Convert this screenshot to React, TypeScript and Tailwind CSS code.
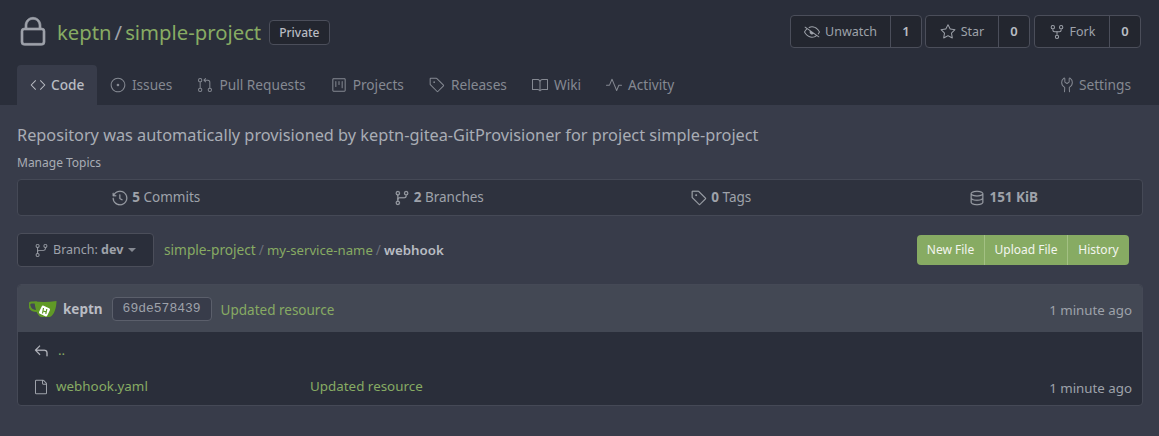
import type { ReactNode } from 'react';
import {
  GoBook,
  GoCode,
  GoDatabase,
  GoEyeClosed,
  GoFile,
  GoGitBranch,
  GoGitPullRequest,
  GoHistory,
  GoIssueOpened,
  GoLock,
  GoProject,
  GoPulse,
  GoReply,
  GoRepoForked,
  GoStar,
  GoTag,
  GoTools,
} from 'react-icons/go';

const tabs = [
  { label: 'Issues', icon: <GoIssueOpened size={16} /> },
  { label: 'Pull Requests', icon: <GoGitPullRequest size={16} /> },
  { label: 'Projects', icon: <GoProject size={16} /> },
  { label: 'Releases', icon: <GoTag size={16} /> },
  { label: 'Wiki', icon: <GoBook size={16} /> },
  { label: 'Activity', icon: <GoPulse size={16} /> },
];

function CountButton({ icon, label, count, width }: { icon: ReactNode; label: string; count: string; width: string }) {
  return (
    <div className="flex h-[33px] rounded border border-[#4b4e5a] bg-[#23262f] text-[12.5px] text-[#9ea2aa]">
      <div className={`flex items-center justify-center gap-[5px] pt-[1px] ${width}`}>
        {icon}
        <span className="pt-[1px]">{label}</span>
      </div>
      <div className="flex w-[31px] items-center justify-center border-l border-[#4b4e5a] pt-[1px] text-[13px] font-semibold text-[#b9bcc3]">
        {count}
      </div>
    </div>
  );
}

function Stat({ icon, value, label }: { icon: ReactNode; value: string; label?: string }) {
  return (
    <div className="flex flex-1 items-center justify-center gap-[4px] text-[13.5px] text-[#9ea2aa] [&_svg]:stroke-[0.3px]">
      {icon}
      <span>
        <b className="font-bold">{value}</b>
        {label ? ` ${label}` : ''}
      </span>
    </div>
  );
}

function TeaLogo() {
  return (
    <svg width="28" height="20" viewBox="0 0 28 20" className="shrink-0">
      <path d="M8 3.5 H2.5 C0.5 3.5 0 5 0.5 7 C1.2 10 4 12 8 12" fill="none" stroke="#609926" strokeWidth="2" />
      <path d="M5.5 2.5 C12 3.2 20 3.2 27.5 2 C27.5 8 25.5 16 21 18 H12 C8 16.5 6 9 5.5 2.5 Z" fill="#609926" />
      <rect x="11" y="7.5" width="9" height="9" rx="1.5" fill="#fff" transform="rotate(25 15.5 12)" />
      <path d="M14.5 9 L13.5 14.5 M17.8 10 L16.8 15 M14 12 L17 12.8" stroke="#609926" strokeWidth="1.2" fill="none" />
    </svg>
  );
}

export default function App() {
  return (
    <div className="min-h-[436px] bg-[#383c4a] font-['Noto_Sans',sans-serif] text-[#9e9e9e]">
      {/* Repo header and tabs */}
      <div className="h-[105px] bg-[#2a2e3a] px-[17px]">
        <div className="flex h-[65px] items-start justify-between">
          <div className="flex items-center pt-[15px]">
            <GoLock size={32} className="stroke-[0.5px] text-[#9ea2aa]" />
            <div className="ml-[8px] flex items-center text-[20.3px] leading-[34px] text-[#87ab63]">
              <span>keptn</span>
              <span className="mx-[3px] text-[#9ea2aa]">/</span>
              <span>simple-project</span>
            </div>
            <span className="ml-[8px] rounded border border-[#4b4e5a] bg-[#23262f] px-[9px] py-[3px] text-[12px] font-medium leading-[17px] text-[#b9bcc3]">
              Private
            </span>
          </div>
          <div className="flex gap-[3px] pt-[15px] pr-[1px]">
            <CountButton icon={<GoEyeClosed size={16} />} label="Unwatch" count="1" width="w-[99px]" />
            <CountButton icon={<GoStar size={16} />} label="Star" count="0" width="w-[72px]" />
            <div className="ml-[1px]">
              <CountButton icon={<GoRepoForked size={16} />} label="Fork" count="0" width="w-[74px]" />
            </div>
          </div>
        </div>
        <div className="flex h-[40px] items-center justify-between text-[13.7px] text-[#858992]">
          <div className="flex h-full items-center">
            <div className="flex h-full items-center gap-[5px] rounded-t bg-[#383c4a] px-[13px] font-medium text-[#b9bcc3]">
              <GoCode size={16} />
              <span className="pt-[1px]">Code</span>
            </div>
            {tabs.map((t) => (
              <div key={t.label} className="flex h-full items-center gap-[6px] px-[12.5px]">
                {t.icon}
                <span className="pt-[1px]">{t.label}</span>
              </div>
            ))}
          </div>
          <div className="flex items-center gap-[4px] pr-[11px]">
            <GoTools size={16} />
            <span className="pt-[1px]">Settings</span>
          </div>
        </div>
      </div>

      <div className="pl-[17px] pr-[16px]">
        {/* Description */}
        <p className="pt-[19px] text-[16.3px] leading-[22px] text-[#a9adb5]">
          Repository was automatically provisioned by keptn-gitea-GitProvisioner for project simple-project
        </p>
        <p className="mt-[9px] text-[12px] leading-[16px] text-[#a9adb5]">Manage Topics</p>

        {/* Stats */}
        <div className="mt-[8px] flex h-[37px] rounded border border-[#454956] bg-[#2e323e]">
          <div className="-mx-[3px] flex flex-1">
            <Stat icon={<GoHistory size={16} />} value="5" label="Commits" />
            <Stat icon={<GoGitBranch size={16} />} value="2" label="Branches" />
            <Stat icon={<GoTag size={16} />} value="0" label="Tags" />
            <Stat icon={<GoDatabase size={16} />} value="151 KiB" />
          </div>
        </div>

        {/* Branch and breadcrumb */}
        <div className="mt-[17px] flex h-[34px] items-center justify-between">
          <div className="flex items-center">
            <div className="flex h-[34px] w-[137px] items-center gap-[4px] rounded border border-[#4b4e5a] bg-[#2a2e3a] pl-[16px] text-[12.5px] text-[#9ea2aa]">
              <GoGitBranch size={15} />
              <span>
                Branch: <b className="font-bold">dev</b>
              </span>
              <span className="ml-[1px] h-0 w-0 border-x-[4px] border-t-[4px] border-x-transparent border-t-[#858992]" />
            </div>
            <div className="ml-[10px] text-[13.7px] text-[#87ab63]">
              <span>simple-project</span>
              <span className="mx-[3px] text-[#6b6f7a]">/</span>
              <span className="text-[13.2px]">my-service-name</span>
              <span className="mx-[3px] text-[#6b6f7a]">/</span>
              <b className="text-[13.3px] font-semibold text-[#b9bcc3]">webhook</b>
            </div>
          </div>
          <div className="mr-[14px] flex h-[30px] rounded bg-[#87ab63] text-[12px] text-[#f3f5ef]">
            <span className="flex w-[68px] items-center justify-center border-r border-[#a3c083]">New File</span>
            <span className="flex w-[83px] items-center justify-center border-r border-[#a3c083]">Upload File</span>
            <span className="flex w-[61px] items-center justify-center">History</span>
          </div>
        </div>

        {/* File table */}
        <div className="mt-[17px] overflow-hidden rounded border border-[#454956] bg-[#2a2e3a]">
          <div className="flex h-[47px] items-center justify-between bg-[#434854] pl-[11px] pr-[10px]">
            <div className="flex items-center">
              <TeaLogo />
              <b className="ml-[6px] pt-[1px] text-[13.5px] font-bold text-[#b9bcc3]">keptn</b>
              <span className="ml-[9px] flex h-[24px] w-[100px] items-center justify-center rounded border border-[#5b5f6b] bg-[#383c4a] font-['Liberation_Mono',monospace] text-[13px] text-[#9ea2aa]">
                69de578439
              </span>
              <span className="ml-[9px] pt-[3px] text-[13.5px] text-[#87ab63]">Updated resource</span>
            </div>
            <span className="pt-[4px] text-[13.3px] text-[#9ea2aa]">1 minute ago</span>
          </div>
          <div className="flex h-[37px] items-center pl-[15px] text-[13.4px] text-[#87ab63]">
            <GoReply size={16} className="stroke-[0.4px] text-[#b9bcc3]" />
            <span className="ml-[9px]">..</span>
          </div>
          <div className="flex h-[36px] items-center justify-between pl-[15px] pr-[10px] text-[13.4px]">
            <div className="flex items-center">
              <GoFile size={16} className="text-[#9ea2aa]" />
              <span className="ml-[7px] w-[254px] pb-[1px] text-[#87ab63]">webhook.yaml</span>
              <span className="pb-[1px] text-[#87ab63]">Updated resource</span>
            </div>
            <span className="pt-[3px] text-[13.3px] text-[#9ea2aa]">1 minute ago</span>
          </div>
        </div>
      </div>
    </div>
  );
}
